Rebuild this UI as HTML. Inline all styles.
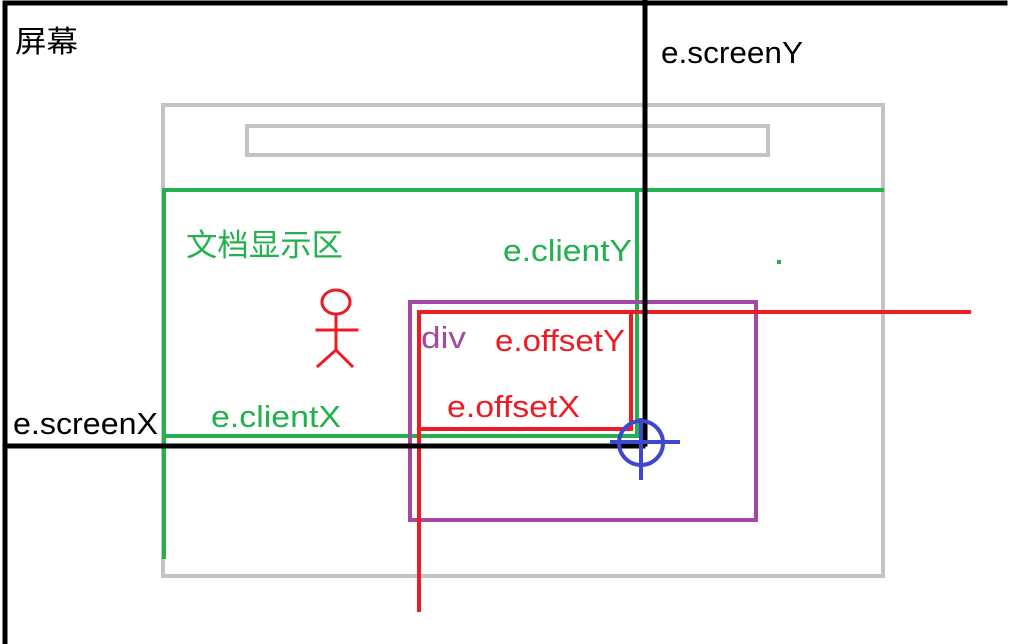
<!DOCTYPE html>
<html><head><meta charset="utf-8"><style>
html,body{margin:0;padding:0;background:#fff;width:1020px;height:644px;overflow:hidden}
text{font-family:"Liberation Sans","Noto Sans CJK SC",sans-serif}
</style></head><body>
<svg width="1020" height="644" xmlns="http://www.w3.org/2000/svg">
<g fill="none" stroke-linecap="square">
<rect x="163" y="105" width="720" height="471" stroke="#c3c3c3" stroke-width="4"/>
<rect x="247" y="126" width="521" height="29" stroke="#c3c3c3" stroke-width="4"/>
<g stroke="#22b14c" stroke-width="4">
<line x1="164" y1="190" x2="882" y2="190"/>
<line x1="164" y1="190" x2="164" y2="557"/>
<line x1="637" y1="190" x2="637" y2="435"/>
<line x1="164" y1="436" x2="637" y2="436"/>
</g>
<rect x="410" y="302" width="346" height="218" stroke="#a349a4" stroke-width="4"/>
<g stroke="#ed1c24" stroke-width="4">
<rect x="419" y="312" width="212" height="117"/>
<line x1="631" y1="312" x2="969" y2="312"/>
<line x1="419" y1="429" x2="419" y2="610"/>
<ellipse cx="336" cy="302" rx="14" ry="12" stroke-width="3"/>
<line x1="336" y1="314" x2="336" y2="350" stroke-width="3"/>
<line x1="317" y1="330" x2="357" y2="330" stroke-width="3"/>
<line x1="336" y1="350" x2="318" y2="366" stroke-width="3"/>
<line x1="336" y1="350" x2="352" y2="366" stroke-width="3"/>
</g>
<g stroke="#000" stroke-width="5">
<line x1="5" y1="3" x2="1005" y2="3"/>
<line x1="5" y1="3" x2="5" y2="644"/>
<line x1="645" y1="0" x2="645" y2="444"/>
<line x1="5" y1="446" x2="643" y2="446"/>
</g>
<g stroke="#3f48cc" stroke-width="4">
<circle cx="641" cy="443" r="22"/>
<line x1="612" y1="442" x2="678" y2="442"/>
<line x1="641" y1="420" x2="641" y2="478"/>
</g>
</g>
<rect x="777" y="260" width="4" height="4" fill="#22b14c"/>
<text x="15" y="52" font-size="30" fill="#000" textLength="63" lengthAdjust="spacingAndGlyphs">屏幕</text>
<text x="661" y="63" font-size="31" fill="#000" textLength="142" lengthAdjust="spacingAndGlyphs">e.screenY</text>
<text x="186" y="256" font-size="31" fill="#22b14c" textLength="157" lengthAdjust="spacingAndGlyphs">文档显示区</text>
<text x="503" y="261" font-size="31" fill="#22b14c" textLength="129" lengthAdjust="spacingAndGlyphs">e.clientY</text>
<text x="421" y="348" font-size="31" fill="#a349a4" textLength="45" lengthAdjust="spacingAndGlyphs">div</text>
<text x="495" y="351" font-size="31" fill="#ed1c24" textLength="130" lengthAdjust="spacingAndGlyphs">e.offsetY</text>
<text x="447" y="417" font-size="31" fill="#ed1c24" textLength="133" lengthAdjust="spacingAndGlyphs">e.offsetX</text>
<text x="211" y="427" font-size="31" fill="#22b14c" textLength="130" lengthAdjust="spacingAndGlyphs">e.clientX</text>
<text x="13" y="434" font-size="31" fill="#000" textLength="145" lengthAdjust="spacingAndGlyphs">e.screenX</text>
</svg>
</body></html>
